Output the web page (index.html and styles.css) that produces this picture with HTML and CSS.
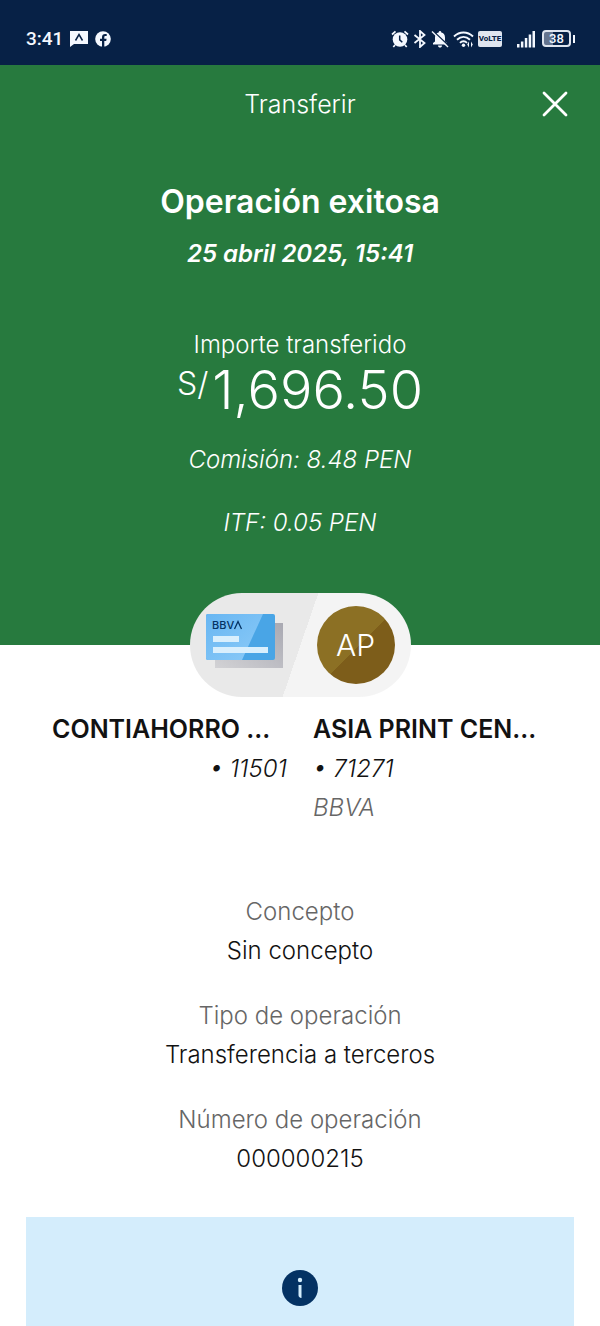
FILE: index.html
```html
<!DOCTYPE html>
<html lang="es">
<head>
<meta charset="utf-8">
<meta name="viewport" content="width=device-width, initial-scale=1">
<title>Transferir</title>
<link rel="stylesheet" href="styles.css">
</head>
<body>
<div class="statusbar">
  <div class="status-group">
    <span class="clock">3:41</span>
    <svg width="18" height="16" viewBox="0 0 18 16"><path d="M0 0h18v13H4l-4 3z" fill="#f4f8ff"/><path d="M5.500 9.500 9 3.500l3.500 6" fill="none" stroke="#072146" stroke-width="1.500"/></svg>
    <svg width="16" height="16" viewBox="0 0 16 16"><circle cx="8" cy="8" r="7.800" fill="#f4f8ff"/><path d="M7 16V10H5V7.700h2V6.200c0-2.200 1.200-3.300 3.100-3.300l1.600.1v2h-1.100c-1 0-1.300.5-1.300 1.300v1.400h2.300L11.200 10H9.300v6z" fill="#072146"/></svg>
  </div>
  <div class="status-group status-right">
    <svg width="18" height="18" viewBox="0 0 18 18"><circle cx="9" cy="9.500" r="7.300" fill="#f4f8ff"/><path d="M1 4.500 4.500 1.300M17 4.500l-3.500-3.200M4 15l-1.700 2M14 15l1.700 2" stroke="#f4f8ff" stroke-width="1.700"/><path d="M8.700 5.500v4.300l2.600 2.400" fill="none" stroke="#072146" stroke-width="1.500"/></svg>
    <svg width="14" height="18" viewBox="0 0 14 18"><path d="m1.500 5 10 8L7 17V1l4.500 4-10 8" fill="none" stroke="#f4f8ff" stroke-width="1.800"/></svg>
    <svg width="18" height="18" viewBox="0 0 18 18"><path d="M2 14.500V13l2-1.500V7.500C4 4.500 5.500 3 7.700 2.500c0-2 2.600-2 2.600 0C12.500 3 14 4.500 14 7.500v4l2 1.500v1.500zM7 15.500h4c0 2.700-4 2.700-4 0z" fill="#f4f8ff"/><path d="m2 1 16 15" stroke="#072146" stroke-width="1.500"/><path d="m1 1.500 16 15.500" stroke="#f4f8ff" stroke-width="1.400"/></svg>
    <svg width="21" height="18" viewBox="0 0 21 18"><g fill="none" stroke="#f4f8ff" stroke-width="1.900"><path d="M1 6.500c5.500-5.300 13.500-5.300 19 0M4 9.800c4-3.800 9-3.800 13 0M7 12.800c2-2 5-2 7 0"/></g><circle cx="10.500" cy="15.300" r="1.700" fill="#f4f8ff"/><path d="m16 11.500-1.800 3 1.800 3zM18 11.500l1.800 3-1.800 3z" fill="#f4f8ff"/></svg>
    <span class="volte">VoLTE</span>
    <svg class="signal" width="18" height="18" viewBox="0 0 18 18"><g fill="#f4f8ff"><path d="M0 14h2.500v3.500H0zM3.900 11.500h2.500v6H3.900zM7.800 8h2.500v9.500H7.800zM11.700 4.500h2.500v13h-2.500zM15.500 1H18v16.500h-2.500z"/></g></svg>
    <span class="battery"><span class="battery-level">38</span></span>
  </div>
</div>

<header class="hero">
  <div class="topbar">
    <span class="topbar-title">Transferir</span>
    <button class="close" type="button" aria-label="Cerrar">
      <svg width="28" height="28" viewBox="0 0 28 28"><path d="m3 3 22 22M25 3 3 25" stroke="#fff" stroke-width="2.800" stroke-linecap="round"/></svg>
    </button>
  </div>
  <h1 class="result">Operación exitosa</h1>
  <p class="date">25 abril 2025, 15:41</p>
  <p class="amount-label">Importe transferido</p>
  <p class="amount"><span class="currency">S/</span><span>1,696.50</span></p>
  <p class="fee">Comisión: 8.48 PEN</p>
  <p class="fee">ITF: 0.05 PEN</p>
</header>

<main class="content">
  <div class="pill">
    <svg class="card" width="78" height="56" viewBox="0 0 78 56" role="img" aria-label="BBVA">
      <defs>
        <linearGradient id="shade" x1="0" y1="1" x2="1" y2="0"><stop offset="0" stop-color="#d2d2d5"/><stop offset="1" stop-color="#a9a9b2"/></linearGradient>
        <linearGradient id="blue" x1="0" y1="0" x2="1" y2="1"><stop offset="0" stop-color="#68b6f2"/><stop offset="1" stop-color="#8ccbf8"/></linearGradient>
      </defs>
      <path d="M9 9h68v45H9z" fill="url(#shade)"/>
      <rect width="69" height="46" rx="2" fill="#49a5e6"/>
      <path d="M2 0h55L36 46H2a2 2 0 0 1-2-2V2a2 2 0 0 1 2-2z" fill="url(#blue)"/>
      <path d="M7 22h26v6H7zM7 33h55v6H7z" fill="#d9effd"/>
      <text class="card-brand" x="6" y="15">BBV</text>
      <path d="m28.500 15 3.500-7.500 3.500 7.500" fill="none" stroke="#043263" stroke-width="1.300"/>
    </svg>
    <span class="avatar">AP</span>
  </div>

  <section class="parties">
    <div class="party">
      <h2 class="party-name">CONTIAHORRO ...</h2>
      <p class="account account-from">• 11501</p>
    </div>
    <div class="party">
      <h2 class="party-name">ASIA PRINT CEN...</h2>
      <p class="account">• 71271</p>
      <p class="account bank">BBVA</p>
    </div>
  </section>

  <dl class="details">
    <div><dt>Concepto</dt><dd>Sin concepto</dd></div>
    <div><dt>Tipo de operación</dt><dd>Transferencia a terceros</dd></div>
    <div><dt>Número de operación</dt><dd>000000215</dd></div>
  </dl>

  <aside class="notice">
    <svg width="36" height="36" viewBox="0 0 36 36" role="img" aria-label="Información"><circle cx="18" cy="18" r="18" fill="#043263"/><circle cx="18" cy="10" r="2.200" fill="#d4edfc"/><path d="M16.500 15h3v13c-2-.3-3-1.200-3-3z" fill="#d4edfc"/></svg>
  </aside>
</main>
</body>
</html>
```
FILE: styles.css
```css
* { box-sizing: border-box; }

body {
  margin: 0;
  background: #fff;
  color: #121212;
  font-family: Inter, "Liberation Sans", sans-serif;
  font-size: 24px;
  font-weight: 300;
  line-height: 39px;
}

h1, h2, p, dl, dd { margin: 0; }

.statusbar {
  display: flex;
  justify-content: space-between;
  align-items: center;
  height: 65px;
  padding: 12px 25px 0 26px;
  background: #072146;
  color: #f4f8ff;
}

.status-group { display: flex; align-items: center; gap: 7px; }
.status-right { gap: 4px; }
.clock { font-family: Roboto, sans-serif; font-size: 19px; font-weight: 500; line-height: 24px; }

.volte {
  width: 24px;
  border-radius: 2px;
  background: #dfe5ef;
  color: #072146;
  font: 800 8px/16px Roboto, sans-serif;
  text-align: center;
}

.signal { margin-left: 11px; }

.battery {
  display: flex;
  align-items: center;
  margin-left: 3px;
}

.battery::after {
  content: "";
  width: 2px;
  height: 8px;
  margin-left: 2px;
  background: #f4f8ff;
}

.battery-level {
  width: 29px;
  border: 2px solid #dfe5ef;
  border-radius: 4px;
  background: linear-gradient(90deg, #64748f 38%, #072146 38%);
  font: 500 13px/13px Roboto, sans-serif;
  text-align: center;
}

.hero {
  padding-bottom: 103px;
  background: #277a3e;
  color: #fff;
  text-align: center;
}

.topbar {
  display: grid;
  grid-template-columns: 1fr auto 1fr;
  align-items: center;
  height: 78px;
  padding: 0 26px;
}

.topbar-title { grid-column: 2; font-size: 25px; }

.close {
  display: flex;
  justify-self: end;
  padding: 5px;
  border: 0;
  background: none;
  cursor: pointer;
}

.result { margin-top: 39px; font-size: 32px; font-weight: 600; line-height: 39px; }
.date { margin-top: 13px; font-weight: 600; font-style: italic; }
.amount-label { margin-top: 52px; }
.amount { display: flex; justify-content: center; gap: 4px; font-size: 54px; line-height: 52px; }
.currency { font-size: 32px; line-height: 39px; }
.fee { margin-top: 24px; font-style: italic; }

.content { text-align: center; }

.pill {
  display: flex;
  justify-content: space-between;
  align-items: center;
  width: 221px;
  height: 104px;
  margin: -52px auto 13px;
  padding: 0 16px;
  border-radius: 52px;
  background: linear-gradient(109deg, #e9e9e9 50%, #f4f4f4 50%);
}

.card { margin-bottom: 6px; }
.card-brand { fill: #043263; font: 500 11px Inter, sans-serif; }

.avatar {
  width: 78px;
  border-radius: 50%;
  background: linear-gradient(135deg, #8c7024 52%, #7d5d1a 52%);
  color: #fff;
  font-size: 30px;
  line-height: 78px;
}

.parties {
  display: grid;
  grid-template-columns: 1fr 1fr;
  gap: 26px;
  padding: 0 52px;
  text-align: left;
}

.party { min-width: 0; }
.party-name { font-size: 25px; font-weight: 600; line-height: 39px; white-space: nowrap; }
.account { font-style: italic; }
.account-from { text-align: right; }
.bank, dt { color: #666; }

.details { display: grid; gap: 26px; margin-top: 65px; }

.notice {
  display: flex;
  justify-content: center;
  margin: 39px 26px 0;
  padding: 53px 20px 20px;
  background: #d4edfc;
}
```
